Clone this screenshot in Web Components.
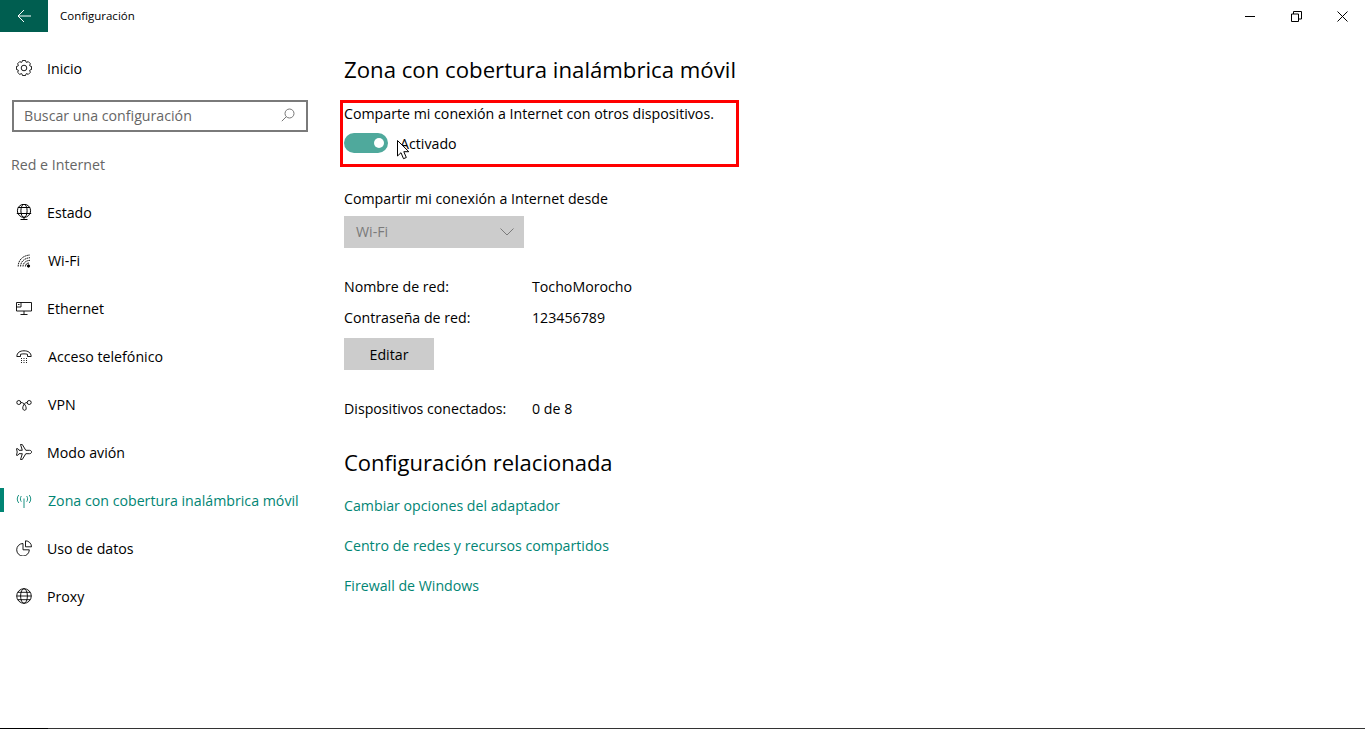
<!DOCTYPE html>
<html lang="es">
<head>
<meta charset="utf-8">
<title>Configuración</title>
<style>
    html, body { margin: 0; height: 100%; background: #fff; overflow: hidden; }
    body {
        font-family: "Open Sans", "Liberation Sans", sans-serif;
        font-size: 14.2px;
        color: #000;
    }
    settings-app { height: 100vh; }
</style>
</head>
<body>
<settings-app>
    <settings-titlebar slot="top">Configuración</settings-titlebar>

    <nav-entry slot="nav" class="home" icon="gear">Inicio</nav-entry>
    <search-box slot="nav" placeholder="Buscar una configuración"></search-box>
    <nav-group slot="nav">Red e Internet</nav-group>
    <nav-entry slot="nav" icon="status">Estado</nav-entry>
    <nav-entry slot="nav" icon="wifi" nudge>Wi-Fi</nav-entry>
    <nav-entry slot="nav" icon="ethernet">Ethernet</nav-entry>
    <nav-entry slot="nav" icon="dialup" nudge>Acceso telefónico</nav-entry>
    <nav-entry slot="nav" icon="vpn" nudge>VPN</nav-entry>
    <nav-entry slot="nav" icon="plane">Modo avión</nav-entry>
    <nav-entry slot="nav" icon="hotspot" active nudge>Zona con cobertura inalámbrica móvil</nav-entry>
    <nav-entry slot="nav" icon="data">Uso de datos</nav-entry>
    <nav-entry slot="nav" icon="globe">Proxy</nav-entry>

    <hotspot-page slot="main"></hotspot-page>
</settings-app>

<script>
// gear outline with 8 teeth, the fluent icon is too fiddly to write by hand
function gearPath() {
    let d = '';
    for (let i = 0; i < 8; i++) {
        const a = i * Math.PI / 4;
        const pts = [[6.2, -.34], [7.7, -.2], [7.7, .2], [6.2, .34]];
        pts.forEach(([r, o], j) => {
            const x = (8 + r * Math.cos(a + o)).toFixed(2);
            const y = (8 + r * Math.sin(a + o)).toFixed(2);
            d += (i === 0 && j === 0 ? 'M' : 'L') + x + ' ' + y;
        });
    }
    return d + 'z';
}

const ICONS = {
    gear: `<circle cx="8" cy="8" r="2.8"/><path d="${gearPath()}"/>`,
    status: `<g stroke-width="1"><circle cx="8" cy="6.8" r="6.6"/><ellipse cx="8" cy="6.8" rx="3.1" ry="6.6"/><path d="M1.800 3.500h12.400M.8 9.500h14.400M8 13.400v2.100M4.500 15.500h7"/></g>`,
    wifi: `<path d="M2.200 14.500C2.200 8.500 6.500 3.500 14 3M4.600 14.500c0-4.300 3.200-8.300 9.400-8.800M7 14.500c0-3.200 2.400-5.900 7-6.200" stroke-dasharray="1.600 .6"/><path d="M9.400 14.500c0-1.800 1.200-3.300 3.600-3.500"/><circle cx="12.500" cy="14" r="1.200" fill="#000"/>`,
    ethernet: `<path d="M5 2.500h10.500v8.500H.5V7M.5 2.500H5V7H.5zM8 11v3.500M4.500 14.500h7M2 4.500h1.500"/>`,
    dialup: `<path d="M.8 8.500C1 4.500 4 2.800 8 2.800s7 1.700 7.200 5.700h-3.700V6.300c-2-.6-5-.6-7 0v2.200z"/><path d="M5 10.500h6.500M5 12.500h6.500M5 14.500h6.500" stroke-dasharray="1 1.500"/>`,
    vpn: `<g stroke-width=".9"><circle cx="2.800" cy="6.500" r="2"/><circle cx="13.200" cy="6.500" r="2"/><path d="M4.800 6.500c2.500 0 4 1.500 5 4 .8 2 .3 3.800-1.200 3.800S6.300 12.500 7 10.500 8.800 6.500 11.200 6.500"/></g>`,
    plane: `<path d="M15.600 8c0-1-1-1.700-2.100-1.700H9.800L6.200.4H4.500l1.800 5.900H3L1.800 4.700H.5L1.200 8l-.7 3.300h1.300L3 9.700h3.300l-1.800 5.900h1.700l3.600-5.900h3.700c1.100 0 2.100-.7 2.100-1.700z"/>`,
    hotspot: `<path d="M8 6.500v9.500"/><path d="M5.300 4c-1.200 1.700-1.200 4 0 5.700M10.700 4c1.200 1.700 1.200 4 0 5.700M2.800 3c-2 2.500-2 5.500 0 8M13.200 3c2 2.500 2 5.500 0 8"/>`,
    data: `<path d="M7 3.500a6.300 6.300 0 1 0 6.300 6.300H7z"/><path d="M9.500.8a6 6 0 0 1 6 6h-6z"/>`,
    globe: `<circle cx="8" cy="8" r="7.300"/><ellipse cx="8" cy="8" rx="3.400" ry="7.300"/><path d="M.7 8h14.600M1.800 4.300h12.400M1.800 11.700h12.400"/>`
};

function makeTemplate(html) {
    const t = document.createElement('template');
    t.innerHTML = html;
    return t;
}

class Base extends HTMLElement {
    constructor() {
        super();
        this.attachShadow({ mode: 'open' });
        this.shadowRoot.appendChild(this.constructor.template.content.cloneNode(true));
    }
}

class SettingsApp extends Base {
    static template = makeTemplate(`
        <style>
            :host { display: grid; grid-template: 32px 1fr / 320px 1fr; box-sizing: border-box; border-bottom: 1px solid #333; position: relative; }
            .top { grid-column: 1 / 3; }
            .nav { display: flex; flex-direction: column; padding-top: 12px; }
            .corner { position: absolute; left: 0; bottom: -1px; width: 48px; height: 1px; background: #000; }
        </style>
        <div class="top"><slot name="top"></slot></div>
        <div class="nav"><slot name="nav"></slot></div>
        <div class="main"><slot name="main"></slot></div>
        <div class="corner"></div>
    `);
}

class SettingsTitlebar extends Base {
    static template = makeTemplate(`
        <style>
            :host { display: flex; height: 32px; align-items: center; font-size: 11.500px; }
            .back { width: 48px; height: 32px; background: #005e50; display: flex; align-items: center; justify-content: center; }
            .title { margin: -1px 0 0 12px; flex: 1; }
            .win { width: 46px; height: 32px; display: flex; align-items: center; justify-content: center; }
            svg { fill: none; stroke: #000; stroke-width: 1; display: block; }
        </style>
        <div class="back"><svg width="16" height="16" viewBox="0 0 16 16" style="stroke:#fff"><path d="M15 8H2M8 2 2 8l6 6"/></svg></div>
        <div class="title"><slot></slot></div>
        <div class="win"><svg width="11" height="11" viewBox="0 0 11 11"><path d="M0 5.500h10"/></svg></div>
        <div class="win"><svg width="11" height="11" viewBox="0 0 11 11"><path d="M.5 3h7v7.500h-7zM2.500 3V.5h8v7.500H7.500"/></svg></div>
        <div class="win"><svg width="11" height="11" viewBox="0 0 11 11"><path d="M.5.500l10 10M10.500.5l-10 10"/></svg></div>
    `);
}

class NavEntry extends Base {
    static template = makeTemplate(`
        <style>
            :host { display: flex; align-items: center; height: 48px; padding-left: 16px; gap: 15px; position: relative; white-space: nowrap; }
            :host([nudge]) { gap: 16px; }
            :host([active]) { color: #018574; }
            :host([active])::before { content: ""; position: absolute; left: 0; top: 12px; width: 4px; height: 24px; background: #018574; }
            svg { width: 16px; height: 16px; fill: none; stroke: currentColor; stroke-width: .9; flex: none; }
        </style>
        <svg viewBox="0 0 16 16"></svg><slot></slot>
    `);

    connectedCallback() {
        this.shadowRoot.querySelector('svg').innerHTML = ICONS[this.getAttribute('icon')] || '';
    }
}

class SearchBox extends Base {
    static template = makeTemplate(`
        <style>
            :host { display: flex; align-items: center; justify-content: space-between; box-sizing: border-box; height: 32px; margin: 8px 12px 0; padding: 0 11px 2px 10px; border: 2px solid #7a7a7a; color: #666; }
            svg { width: 14px; height: 14px; fill: none; stroke: #777; stroke-width: 1; }
        </style>
        <span class="ph"></span>
        <svg viewBox="0 0 14 14"><circle cx="8.500" cy="5.500" r="4.500"/><path d="M5.300 8.700.8 13.200"/></svg>
    `);

    connectedCallback() {
        this.shadowRoot.querySelector('.ph').textContent = this.getAttribute('placeholder');
    }
}

class NavGroup extends Base {
    static template = makeTemplate(`
        <style>
            :host { display: block; height: 56px; box-sizing: border-box; padding: 22px 0 0 11px; line-height: 22px; color: #666; }
        </style>
        <slot></slot>
    `);
}

class ToggleSwitch extends Base {
    static template = makeTemplate(`
        <style>
            :host { display: flex; align-items: center; height: 22px; gap: 12px; }
            .track { width: 44px; height: 20px; margin-top: -2px; border-radius: 10px; background: #4fa99c; position: relative; flex: none; }
            .knob { position: absolute; right: 4px; top: 5px; width: 10px; height: 10px; border-radius: 50%; background: #fff; }
        </style>
        <div class="track"><div class="knob"></div></div><slot></slot>
    `);
}

class DropDown extends Base {
    static template = makeTemplate(`
        <style>
            :host { display: flex; align-items: center; justify-content: space-between; box-sizing: border-box; width: 180px; height: 32px; padding: 0 10px 0 12px; background: #ccc; color: #7a7a7a; }
            svg { width: 14px; height: 8px; fill: none; stroke: #7a7a7a; stroke-width: 1; }
        </style>
        <slot></slot>
        <svg viewBox="0 0 14 8"><path d="M.5.500 7 7l6.500-6.500"/></svg>
    `);
}

class GreyButton extends Base {
    static template = makeTemplate(`
        <style>
            :host { display: flex; align-items: center; justify-content: center; box-sizing: border-box; width: 90px; height: 32px; padding-top: 1px; background: #ccc; }
        </style>
        <slot></slot>
    `);
}

class InfoRow extends Base {
    static template = makeTemplate(`
        <style>
            :host { display: grid; grid-template-columns: 188px 1fr; line-height: 22px; }
        </style>
        <div><slot name="label"></slot></div>
        <div><slot></slot></div>
    `);
}

class HotspotPage extends Base {
    static template = makeTemplate(`
        <style>
            :host { display: block; padding-left: 24px; line-height: 22px; position: relative; }
            h2 { margin: 0; font-size: 22.100px; font-weight: 400; line-height: 30px; white-space: nowrap; }
            .title { margin-top: 23px; font-size: 22.200px; }
            .mark { box-sizing: border-box; width: 399px; height: 67px; margin: 15px 0 0 -4px; padding-left: 1px; border: 3px solid #f00; }
            toggle-switch { margin-top: 8px; }
            .from { margin-top: 21px; }
            drop-down { margin-top: 6px; }
            .name { margin-top: 28px; }
            .pass { margin-top: 9px; }
            grey-button { margin-top: 9px; }
            .conn { margin-top: 28px; }
            .rel { margin-top: 27px; font-size: 22px; }
            a { display: block; color: #018574; text-decoration: none; }
            .l1 { margin-top: 18px; }
            .l2 { margin-top: 18px; }
            .cursor { position: absolute; left: 77px; top: 85px; width: 13px; height: 20px; }
        </style>
        <h2 class="title">Zona con cobertura inalámbrica móvil</h2>
        <div class="mark">
            <div>Comparte mi conexión a Internet con otros dispositivos.</div>
            <toggle-switch>Activado</toggle-switch>
        </div>
        <div class="from">Compartir mi conexión a Internet desde</div>
        <drop-down>Wi-Fi</drop-down>
        <info-row class="name"><span slot="label">Nombre de red:</span>TochoMorocho</info-row>
        <info-row class="pass"><span slot="label">Contraseña de red:</span>123456789</info-row>
        <grey-button>Editar</grey-button>
        <info-row class="conn"><span slot="label">Dispositivos conectados:</span>0 de 8</info-row>
        <h2 class="rel">Configuración relacionada</h2>
        <a class="l1">Cambiar opciones del adaptador</a>
        <a class="l2">Centro de redes y recursos compartidos</a>
        <a class="l2">Firewall de Windows</a>
        <svg class="cursor" viewBox="0 0 13 20"><path d="M.5.500v15.500l3.500-3.300 2.500 6 2.800-1.200-2.500-5.800h5z" fill="#fff" stroke="#000" stroke-width="1"/></svg>
    `);
}

customElements.define('settings-app', SettingsApp);
customElements.define('settings-titlebar', SettingsTitlebar);
customElements.define('nav-entry', NavEntry);
customElements.define('search-box', SearchBox);
customElements.define('nav-group', NavGroup);
customElements.define('toggle-switch', ToggleSwitch);
customElements.define('drop-down', DropDown);
customElements.define('grey-button', GreyButton);
customElements.define('info-row', InfoRow);
customElements.define('hotspot-page', HotspotPage);
</script>
</body>
</html>
